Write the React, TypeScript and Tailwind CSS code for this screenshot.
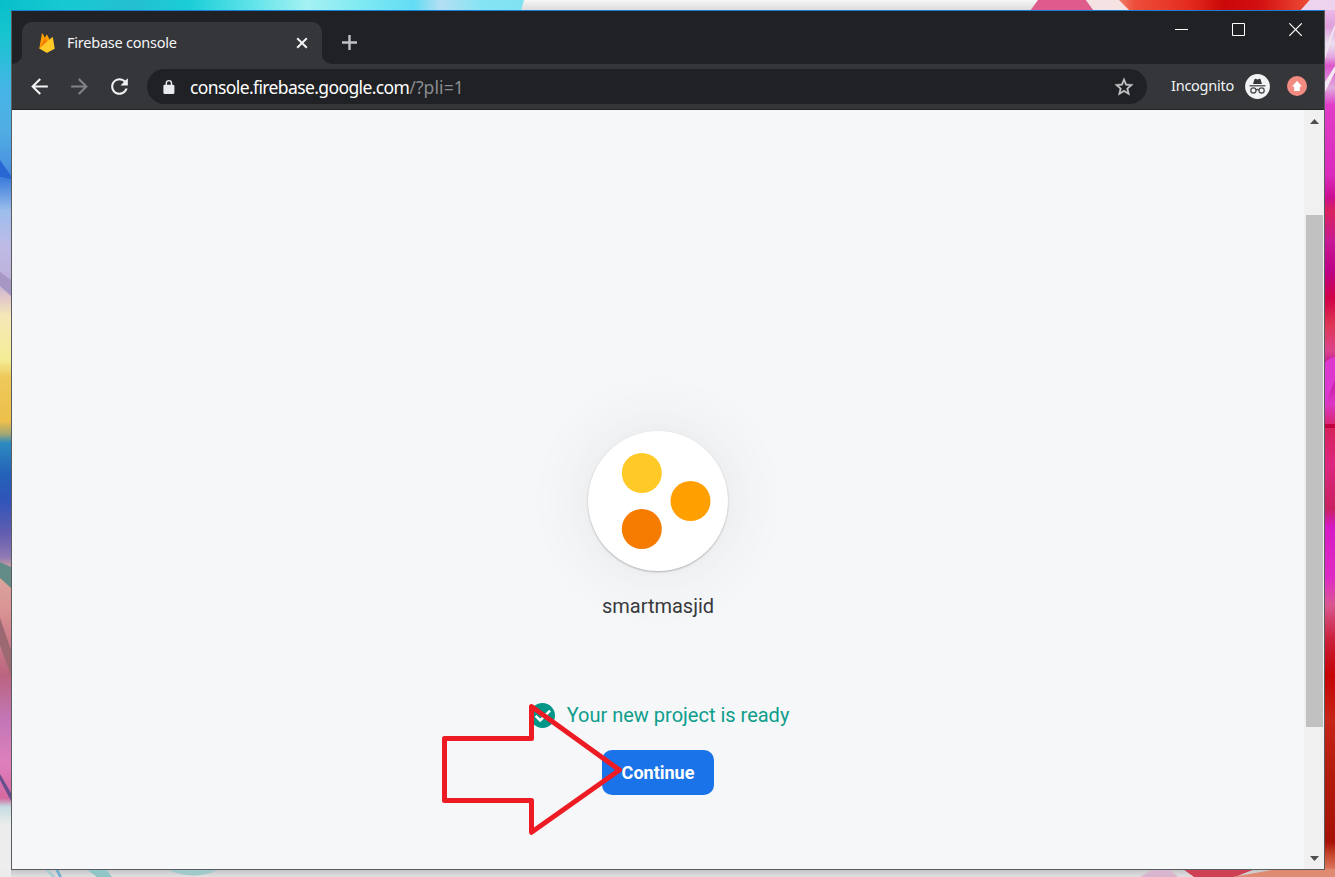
import type { ReactNode } from "react";

function Wallpaper() {
  return (
    <svg className="absolute inset-0" width="1335" height="877" viewBox="0 0 1335 877" aria-hidden="true">
      <defs>
        <linearGradient id="topEdge" x1="0" x2="1335" y1="0" y2="0" gradientUnits="userSpaceOnUse">
          <stop offset="0" stopColor="#08bfc9" />
          <stop offset="0.05" stopColor="#17c9d3" />
          <stop offset="0.1" stopColor="#25bfd0" />
          <stop offset="0.14" stopColor="#19cdd6" />
          <stop offset="0.19" stopColor="#62e4ea" />
          <stop offset="0.23" stopColor="#a5f1f2" />
          <stop offset="0.27" stopColor="#80eaf3" />
          <stop offset="0.31" stopColor="#62dcf4" />
          <stop offset="0.33" stopColor="#b5dff2" />
          <stop offset="0.36" stopColor="#86e4f3" />
          <stop offset="0.39" stopColor="#80e2f1" />
        </linearGradient>
        <linearGradient id="leftEdge" x1="0" x2="0" y1="0" y2="877" gradientUnits="userSpaceOnUse">
          <stop offset="0" stopColor="#08bfc9" />
          <stop offset="0.04" stopColor="#17c4d0" />
          <stop offset="0.1" stopColor="#45b5e6" />
          <stop offset="0.15" stopColor="#51ade3" />
          <stop offset="0.19" stopColor="#4a93e0" />
          <stop offset="0.205" stopColor="#3f7fdc" />
          <stop offset="0.24" stopColor="#9cbdec" />
          <stop offset="0.28" stopColor="#bebbe6" />
          <stop offset="0.32" stopColor="#bdb0d8" />
          <stop offset="0.34" stopColor="#e2c8c8" />
          <stop offset="0.36" stopColor="#f6e8b8" />
          <stop offset="0.41" stopColor="#f5ed96" />
          <stop offset="0.43" stopColor="#edc95a" />
          <stop offset="0.48" stopColor="#eebf4b" />
          <stop offset="0.495" stopColor="#a1a775" />
          <stop offset="0.505" stopColor="#2c8bc0" />
          <stop offset="0.54" stopColor="#2462b8" />
          <stop offset="0.57" stopColor="#2f54ba" />
          <stop offset="0.61" stopColor="#655eb0" />
          <stop offset="0.635" stopColor="#8f7ab4" />
          <stop offset="0.65" stopColor="#dca99e" />
          <stop offset="0.70" stopColor="#d89192" />
          <stop offset="0.77" stopColor="#bb6480" />
          <stop offset="0.82" stopColor="#c276b5" />
          <stop offset="0.87" stopColor="#df80bd" />
          <stop offset="0.91" stopColor="#d5699f" />
          <stop offset="0.92" stopColor="#c3dce2" />
          <stop offset="0.94" stopColor="#ececec" />
          <stop offset="1" stopColor="#eeeeee" />
        </linearGradient>
        <linearGradient id="rightEdge" x1="0" x2="0" y1="0" y2="877" gradientUnits="userSpaceOnUse">
          <stop offset="0" stopColor="#f3c9ef" />
          <stop offset="0.03" stopColor="#e0a0dc" />
          <stop offset="0.05" stopColor="#eadff0" />
          <stop offset="0.065" stopColor="#e2a8df" />
          <stop offset="0.075" stopColor="#dc54cc" />
          <stop offset="0.1" stopColor="#dfabdd" />
          <stop offset="0.12" stopColor="#e03cc8" />
          <stop offset="0.2" stopColor="#d92abb" />
          <stop offset="0.225" stopColor="#ca0f92" />
          <stop offset="0.24" stopColor="#d9225d" />
          <stop offset="0.275" stopColor="#c71995" />
          <stop offset="0.31" stopColor="#bc0086" />
          <stop offset="0.34" stopColor="#d10045" />
          <stop offset="0.37" stopColor="#dd3554" />
          <stop offset="0.4" stopColor="#dd448c" />
          <stop offset="0.42" stopColor="#b90a90" />
          <stop offset="0.46" stopColor="#dc38c6" />
          <stop offset="0.49" stopColor="#d5225d" />
          <stop offset="0.53" stopColor="#de257f" />
          <stop offset="0.58" stopColor="#c72160" />
          <stop offset="0.6" stopColor="#d51ac5" />
          <stop offset="0.66" stopColor="#de2bc4" />
          <stop offset="0.69" stopColor="#d95890" />
          <stop offset="0.73" stopColor="#ca1e39" />
          <stop offset="0.77" stopColor="#c60305" />
          <stop offset="0.82" stopColor="#c62418" />
          <stop offset="0.88" stopColor="#b31c0c" />
          <stop offset="0.96" stopColor="#a61106" />
          <stop offset="0.975" stopColor="#c6482e" />
          <stop offset="1" stopColor="#e79077" />
        </linearGradient>
        <linearGradient id="redPaint" x1="1110" x2="1310" y1="0" y2="0" gradientUnits="userSpaceOnUse">
          <stop offset="0" stopColor="#f59a85" />
          <stop offset="0.12" stopColor="#ed4f3b" />
          <stop offset="0.4" stopColor="#e32a1d" />
          <stop offset="0.57" stopColor="#ca0808" />
          <stop offset="0.75" stopColor="#d21010" />
          <stop offset="1" stopColor="#ed4d38" />
        </linearGradient>
        <linearGradient id="bottomEdge" x1="0" x2="0" y1="868" y2="877" gradientUnits="userSpaceOnUse">
          <stop offset="0" stopColor="#bfbdbf" />
          <stop offset="1" stopColor="#e1e1e2" />
        </linearGradient>
        <linearGradient id="topWhite" x1="0" x2="0" y1="0" y2="10" gradientUnits="userSpaceOnUse">
          <stop offset="0" stopColor="#f6f6f6" />
          <stop offset="1" stopColor="#dcdcdc" />
        </linearGradient>
      </defs>
      <rect width="1335" height="877" fill="#e8e8e8" />
      <rect width="1335" height="11" fill="url(#topWhite)" />
      <path d="M0 0H524L521 11H0Z" fill="url(#topEdge)" />
      <path d="M1038 0H1086L1094 11H1030Z" fill="#de5b8c" />
      <path d="M1086 0H1130V11H1094Z" fill="#f4e3e2" />
      <path d="M1119 0H1310L1300 11H1130Z" fill="url(#redPaint)" />
      <path d="M1310 0H1335V11H1300Z" fill="#eed3ee" />
      <rect y="10" width="11" height="867" fill="url(#leftEdge)" />
      <path d="M0 160L11 176V179L0 177Z" fill="#2866d2" />
      <path d="M0 272L11 280V296L0 286Z" fill="#a797c4" />
      <path d="M0 562L11 567V588L0 578Z" fill="#638c89" />
      <path d="M0 618L11 650V676L0 645Z" fill="#9c6972" />
      <path d="M0 774L11 793V801L0 780Z" fill="#68508e" />
      <path d="M1325 10H1335V877H1325Z" fill="url(#rightEdge)" />
      <path d="M1325 82L1335 66V72L1325 92Z" fill="#f3e8f3" />
      <path d="M1325 50L1335 24V29L1325 59Z" fill="#f0e2f0" />
      <path d="M1325 363Q1328 358 1335 357V381Q1330 390 1325 407Z" fill="#dc38d0" />
      <path d="M1325 424H1335V428H1325Z" fill="#c2003f" />
      <rect y="869" width="1335" height="8" fill="url(#bottomEdge)" />
      <rect y="869" width="11" height="8" fill="#ececec" />
      <path d="M44 869H48L56 877H52Z" fill="#a9cbd1" />
      <path d="M55 869H58L62 877H59Z" fill="#70abd0" />
      <path d="M86 869H106L112 877H97Z" fill="#91c6c8" />
      <path d="M166 869H220Q194 882 166 869Z" fill="#9fc9ca" />
      <path d="M1140 877L1153 869H1169L1178 877Z" fill="#d9b6cf" />
      <path d="M1183 869H1255L1235 877H1194Z" fill="#ce4154" />
      <path d="M1232 877L1277 869H1335V877Z" fill="#df8b73" />
    </svg>
  );
}

type GlyphProps = { d: string; size: string; className?: string };

function Glyph({ d, size, className = "" }: GlyphProps) {
  return (
    <svg viewBox="0 0 24 24" className={`${size} shrink-0 ${className}`} fill="currentColor" aria-hidden="true">
      <path d={d} />
    </svg>
  );
}

function FirebaseLogo() {
  return (
    <svg viewBox="0 0 16 20" className="h-[20px] w-[16px] shrink-0" aria-hidden="true">
      <path d="M0.3 15.6L2.9 0.6Q3.1 0 3.6 0.5L6 4.8L7.4 2Q7.8 1.5 8.3 2L15.2 15.8Z" fill="#ffa000" />
      <path d="M0.3 15.6L6 4.8L8.8 9.6Z" fill="#f57c00" />
      <path d="M0.3 15.6L13.1 4.3Q13.7 3.9 13.9 4.5L15.7 15.7L8.7 19.5Q8 19.9 7.2 19.5Z" fill="#ffca28" />
    </svg>
  );
}

function TabFoot({ side }: { side: "left" | "right" }) {
  return (
    <svg viewBox="0 0 10 10" className="h-[10px] w-[10px] shrink-0 self-end" aria-hidden="true">
      <path d={side === "left" ? "M10 0V10H0A10 10 0 0 0 10 0Z" : "M0 0V10H10A10 10 0 0 1 0 0Z"} fill="#35363a" />
    </svg>
  );
}

function TitleBar() {
  return (
    <div className="flex h-[53px] bg-[#202124]">
      <div className="flex h-full items-end">
        <TabFoot side="left" />
        <div className="flex h-[42px] w-[300px] items-center rounded-t-[10px] bg-[#35363a] pl-[17px] pr-[13px]">
          <FirebaseLogo />
          <span className="ml-[12px] flex-1 whitespace-nowrap text-[14.5px] tracking-[-0.23px] text-[#f4f5f6]">
            Firebase console
          </span>
          <svg viewBox="0 0 14 14" className="h-[14px] w-[14px]" stroke="#f1f3f4" strokeWidth="2" aria-hidden="true">
            <path d="M2.2 2.2L11.8 11.8M11.8 2.2L2.2 11.8" />
          </svg>
        </div>
        <TabFoot side="right" />
        <svg viewBox="0 0 16 16" className="mb-[13px] ml-[9px] h-[16px] w-[16px]" stroke="#bdc1c6" strokeWidth="2.4" aria-hidden="true">
          <path d="M1 7.5H16M8.5 0V15" />
        </svg>
      </div>
      <div className="ml-auto flex gap-[43px] pr-[21px] pt-[12px]">
        <svg viewBox="0 0 14 14" className="h-[14px] w-[14px]" stroke="#fff" aria-hidden="true">
          <path d="M0 6.5H13" />
        </svg>
        <svg viewBox="0 0 14 14" className="h-[14px] w-[14px]" stroke="#fff" fill="none" aria-hidden="true">
          <path d="M0.5 0.5H12.5V12.5H0.5Z" />
        </svg>
        <svg viewBox="0 0 14 14" className="h-[14px] w-[14px]" stroke="#fff" strokeWidth="1.15" aria-hidden="true">
          <path d="M0.3 0.3L12.8 12.8M12.8 0.3L0.3 12.8" />
        </svg>
      </div>
    </div>
  );
}

function IncognitoBadge() {
  return (
    <svg viewBox="0 0 25 25" className="h-[25px] w-[25px] shrink-0" aria-hidden="true">
      <circle cx="12.5" cy="12.5" r="12.4" fill="#f1f3f4" />
      <path d="M8 10L9.6 5.1Q9.8 4.6 10.4 4.8L12.5 5.4L14.6 4.8Q15.2 4.6 15.4 5.1L17 10Z" fill="#35363a" />
      <path d="M4.5 11.8H20.5" stroke="#4b4c50" strokeWidth="1.3" />
      <g fill="none" stroke="#4b4c50" strokeWidth="1.3">
        <circle cx="8.4" cy="16.4" r="2.6" />
        <circle cx="16.6" cy="16.4" r="2.6" />
        <path d="M11 16Q12.5 15 14 16" />
      </g>
    </svg>
  );
}

function Toolbar() {
  return (
    <div className="flex h-[46px] items-center border-b border-[#242528] bg-[#35363a] pb-px pl-[15px] pr-[17px]">
      <div className="flex items-center gap-[15px]">
        <Glyph size="h-[25px] w-[25px]" className="text-[#f1f3f4]" d="M20 11H7.83l5.59-5.59L12 4l-8 8 8 8 1.41-1.41L7.83 13H20v-2z" />
        <Glyph size="h-[25px] w-[25px]" className="text-[#828387]" d="M12 4l-1.41 1.41L16.17 11H4v2h12.17l-5.58 5.59L12 20l8-8z" />
        <Glyph size="h-[25px] w-[25px]" className="text-[#f1f3f4]" d="M17.65 6.35C16.2 4.9 14.21 4 12 4c-4.42 0-7.99 3.58-7.99 8s3.57 8 7.99 8c3.73 0 6.84-2.55 7.73-6h-2.08c-.82 2.33-3.04 4-5.65 4-3.31 0-6-2.69-6-6s2.69-6 6-6c1.66 0 3.14.69 4.22 1.78L13 11h7V4l-2.35 2.35z" />
      </div>
      <div className="ml-[15px] mt-px flex h-[35px] w-[1000px] items-center rounded-full bg-[#202124] pl-[16px] pr-[12px]">
        <svg viewBox="0 0 12 16" className="h-[16px] w-[12px] shrink-0" aria-hidden="true">
          <path d="M3.3 7V4.2A2.6 2.6 0 0 1 8.5 4.2V7" fill="none" stroke="#e8eaed" strokeWidth="1.4" />
          <rect x="0.4" y="5.8" width="11" height="9.2" rx="1.3" fill="#e8eaed" />
        </svg>
        <span className="ml-[15px] flex-1 whitespace-nowrap pt-px text-[17.5px] tracking-[-0.61px] text-white">
          console.firebase.google.com<span className="tracking-[0.1px] text-[#8a8c90]">/?pli=1</span>
        </span>
        <Glyph size="h-[22px] w-[22px]" className="stroke-[#c6c8ca] stroke-[0.4px] text-[#c6c8ca]" d="M22 9.24l-7.19-.62L12 2 9.19 8.63 2 9.24l5.46 4.73L5.82 21 12 17.27 18.18 21l-1.63-7.03L22 9.24zM12 15.4l-3.76 2.27 1-4.28-3.32-2.88 4.38-.38L12 6.1l1.71 4.04 4.38.38-3.32 2.88 1 4.28L12 15.4z" />
      </div>
      <span className="ml-auto mr-[11px] whitespace-nowrap text-[14.5px] tracking-[-0.25px] text-[#f1f3f4]">Incognito</span>
      <IncognitoBadge />
      <svg viewBox="0 0 20 20" className="ml-[17px] h-[20px] w-[20px] shrink-0" aria-hidden="true">
        <circle cx="10" cy="10" r="10" fill="#f28b82" />
        <path d="M10 5L15 10.6H12.8V15H7.2V10.6H5Z" fill="#fff" />
      </svg>
    </div>
  );
}

function Scrollbar() {
  return (
    <div className="flex w-[20px] shrink-0 flex-col items-center bg-[#f0f0f0] pb-[8px] pl-px pt-[9px]">
      <svg viewBox="0 0 9 5" className="h-[5px] w-[9px]" aria-hidden="true">
        <path d="M0 5L4.5 0L9 5Z" fill="#505050" />
      </svg>
      <div className="mt-[91px] h-[512px] w-[17px] bg-[#c1c1c1]" />
      <svg viewBox="0 0 9 5" className="mt-auto h-[5px] w-[9px]" aria-hidden="true">
        <path d="M0 0L4.5 5L9 0Z" fill="#505050" />
      </svg>
    </div>
  );
}

function Page({ children }: { children: ReactNode }) {
  return (
    <div className="flex min-h-0 flex-1 bg-[#f6f7f9]">
      <main className="flex flex-1 flex-col items-center pt-[321px] font-['Roboto',sans-serif]">{children}</main>
      <Scrollbar />
    </div>
  );
}

function ProjectBadge() {
  return (
    <div className="h-[140px] w-[140px] shrink-0 rounded-full bg-white shadow-[0_1px_2px_rgba(0,0,0,0.26),0_0_64px_rgba(60,64,67,0.10)]">
      <svg viewBox="0 0 140 140" aria-hidden="true">
        <circle cx="53.8" cy="42" r="20" fill="#ffca28" />
        <circle cx="102.5" cy="70" r="20" fill="#ffa000" />
        <circle cx="53.8" cy="98" r="20" fill="#f57c00" />
      </svg>
    </div>
  );
}

function PointerArrow() {
  return (
    <svg className="absolute left-[430px] top-[690px]" width="210" height="160" viewBox="430 690 210 160" aria-hidden="true">
      <path d="M444.5 738.5H531.5V706.5L619.5 770L531.5 832.3V800.5H444.5Z" fill="none" stroke="#ed1c24" strokeWidth="5" strokeLinejoin="round" />
    </svg>
  );
}

export default function App() {
  return (
    <div className="relative h-[877px] w-[1335px] overflow-hidden pl-[11px] pt-[10px] font-['Noto_Sans','Open_Sans',sans-serif]">
      <Wallpaper />
      <div className="relative flex h-[860px] w-[1314px] flex-col border border-[#5b5c60] border-t-[#1a7fd8]">
        <TitleBar />
        <Toolbar />
        <Page>
          <ProjectBadge />
          <p className="mt-[23px] text-[20px] leading-[24px] text-[#37393c]">smartmasjid</p>
          <div className="mt-[84px] flex h-[26px] items-center gap-[12px] pl-[3px]">
            <svg viewBox="0 0 25 25" className="h-[25px] w-[25px] shrink-0" aria-hidden="true">
              <circle cx="12.5" cy="12.5" r="12.5" fill="#009688" />
              <path d="M5.6 12.8L10.2 17.4L20 7.6" fill="none" stroke="#fff" strokeWidth="2.5" />
            </svg>
            <span className="whitespace-nowrap text-[20px] leading-[26px] text-[#0d9d8b]">Your new project is ready</span>
          </div>
          <button className="mt-[22px] h-[45px] w-[112px] rounded-[10px] bg-[#1a73e8] text-[18px] font-bold text-white">
            Continue
          </button>
        </Page>
      </div>
      <PointerArrow />
    </div>
  );
}
